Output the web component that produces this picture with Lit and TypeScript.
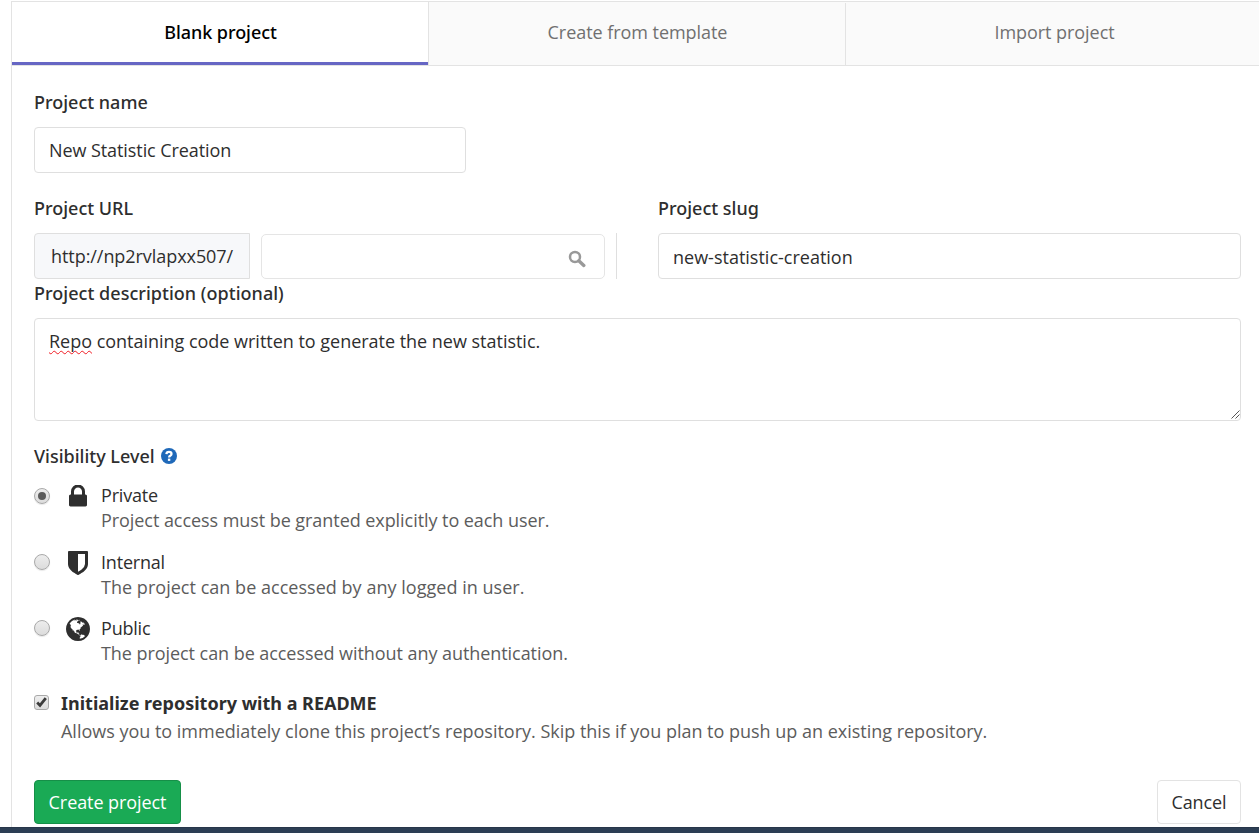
import { LitElement, html, css, svg } from 'lit';
import { customElement, property } from 'lit/decorators.js';
import { classMap } from 'lit/directives/class-map.js';

const lock = svg`<svg width="18" height="22" viewBox="0 256 1152 1408" fill="#2e2e2e"><path d="M320 768h512V576q0-106-75-181t-181-75-181 75-75 181v192zm832 96v576q0 40-28 68t-68 28H96q-40 0-68-28t-28-68V864q0-40 28-68t68-28h32V576q0-184 132-316t316-132 316 132 132 316v192h32q40 0 68 28t28 68z" transform="translate(0 96)"/></svg>`;
const shield = svg`<svg width="20" height="24" viewBox="0 0 1280 1536" fill="#2e2e2e"><path transform="translate(0 -128)" d="M1088 960V320H640v1137q119-63 213-137 235-184 235-360zm192-768v768q0 86-33.5 170.5t-83 150-118 127.5-126.5 103-121 77.5-89.5 49.5-42.5 20q-12 6-26 6t-26-6q-16-7-42.5-20t-89.5-49.5-121-77.5-126.5-103-118-127.5-83-150T0 960V192q0-26 19-45t45-19h1152q26 0 45 19t19 45z"/></svg>`;
const globe = svg`<svg width="24" height="24" viewBox="0 128 1536 1536" fill="#2e2e2e"><path d="M768 128q209 0 385.5 103t279.5 279.5 103 385.5-103 385.5-279.5 279.5-385.5 103-385.5-103-279.5-279.5-103-385.5 103-385.5 279.5-279.5 385.5-103zm274 521q-2 1-9.5 9.5t-13.5 9.5q2 0 4.5-5t5-11 3.5-7q6-7 22-15 14-6 52-12 34-8 51 11-2-2 9.5-13t14.5-12q3-2 15-4.5t15-7.5l2-22q-12 1-17.5-7t-6.5-21q0 2-6 8 0-7-4.5-8t-11.5 1-9 1q-10-3-15-7.5t-8-16.5-4-15q-2-5-9.5-11t-9.5-10q-1-2-2.5-5.5t-3-6.5-4-5.5-5.5-2.5-7 5-7.5 10-4.5 5q-3-2-6-1.5t-4.5 1-4.5 3-5 3.5q-3 2-8.5 3t-8.5 2q15-5-1-11-10-4-16-3 9-4 7.5-12t-8.5-14h5q-1-4-8.5-8.5t-17.5-8.5-13-6q-8-5-34-9.5t-33-.5q-5 6-4.5 10.5t4 14 3.5 12.5q1 6-5.5 13t-6.5 12q0 7 14 15.5t10 21.5q-3 8-16 16t-16 12q-5 8-1.5 18.5t10.5 16.5q2 2 1.5 4t-3.5 4.5-5.5 4-6.5 3.5l-3 2q-11 5-20.5-6t-13.5-26q-7-25-16-30-23-8-29 1-5-13-41-26-25-9-58-4 6-1 0-15-7-15-19-12 3-6 4-17.5t1-13.5q3-13 12-23 1-1 7-8.5t9.5-13.5.5-6q35 4 50-11 5-5 11.5-17t10.5-17q9-6 14-5.5t14.5 5.5 14.5 5q14 1 15.5-11t-7.5-20q12 1 3-17-4-7-8-9-12-4-27 5-8 4 2 8-1-1-9.5 10.5t-16.5 17.5-16-5q-1-1-5.5-13.5t-9.5-13.5q-8 0-16 15 3-8-11-15t-24-8q19-12-8-27-7-4-20.5-5t-19.5 4q-5 7-5.5 11.5t5 8 10.5 5.5 11.5 4 8.5 3q14 10 8 14-2 1-8.5 3.5t-11.5 4.5-6 4q-3 4 0 14t-2 14q-5-5-9-17.5t-7-16.5q7 9-25 6l-10-1q-4 0-16 2t-20.5 1-13.5-8q-4-8 0-20 1-4 4-2-4-3-11-9.5t-10-8.5q-46 15-94 41 6 1 12-1 5-2 13-6.5t10-5.5q34-14 42-7l5-5q14 16 20 25-7-4-30-1-20 6-22 12 7 12 5 18-4-3-11.5-10t-14.5-11-15-5q-16 0-22 1-146 80-235 222 7 7 12 8 4 1 5 9t2.5 11 11.5-3q9 8 3 19 1-1 44 27 19 17 21 21 3 11-10 18-1-2-9-9t-9-4q-3 5 .5 18.5t10.5 12.5q-7 0-9.5 16t-2.5 35.5-1 23.5l2 1q-3 12 5.5 34.5t21.5 19.5q-13 3 20 43 6 8 8 9 3 2 12 7.5t15 10 10 10.5q4 5 10 22.5t14 23.5q-2 6 9.5 20t10.5 23q-1 0-2.5 1t-2.5 1q3 7 15.5 14t15.5 13q1 3 2 10t3 11 8 2q2-20-24-62-15-25-17-29-3-5-5.5-15.5t-4.5-14.5q2 0 6 1.5t8.5 3.5 7.5 4 2 3q-3 7 2 17.5t12 18.5 17 19 12 13q6 6 14 19.5t0 13.5q9 0 20 10.5t17 19.5q5 8 8 26t5 24q2 7 8.5 13.5t12.5 9.5l16 8t13 7q5 2 18.5 10.5t21.5 11.5q10 4 16 4t14.5-2.5 13.5-3.5q15-2 29 15t21 21q36 19 55 11-2 1 .5 7.5t8 15.5 9 14.5 5.5 8.5q5 6 18 15t18 15q6-4 7-9-3 8 7 20t18 10q14-3 14-32-31 15-49-18 0-1-2.5-5.5t-4-8.5-2.5-8.5 0-7.5 5-3q9 0 10-3.5t-2-12.5-4-13q-1-8-11-20t-12-15q-5 9-16 8t-16-9q0 1-1.5 5.5t-1.5 6.5q-13 0-15-1 1-3 2.5-17.5t3.5-22.5q1-4 5.5-12t7.5-14.5 4-12.5-4.5-9.5-17.5-2.5q-19 1-26 20-1 3-3 10.5t-5 11.5-9 7q-7 3-24 2t-24-5q-13-8-22.5-29t-9.5-37q0-10 2.5-26.5t3-25-5.5-24.5q3-2 9-9.5t10-10.5q2-1 4.5-1.5t4.5 0 4-1.5 3-6q-1-1-4-3-3-3-4-3 7 3 28.5-1.5t27.5 1.5q15 11 22-2 0-1-2.5-9.5t-.5-13.5q5 27 29 9 3 3 15.5 5t17.5 5q3 2 7 5.5t5.5 4.5 5-.5 8.5-6.5q10 14 12 24 11 40 19 44 7 3 11 2t4.5-9.5 0-14-1.5-12.5l-1-8v-18l-1-8q-15-3-18.5-12t1.5-18.5 15-18.5q1-1 8-3.5t15.5-6.5 12.5-8q21-19 15-35 7 0 11-9-1 0-5-3t-7.5-5-4.5-2q9-5 2-16 5-3 7.5-11t7.5-10q9 12 21 2 7-8 1-16 5-7 20.5-10.5t18.5-9.5q7 2 8-2t1-12 3-12q4-5 15-9t13-5l17-11q3-4 0-4 18 2 31-11 10-11-6-20 3-6-3-9.5t-15-5.5q3-1 11.5-.5t10.5-1.5q15-10-7-16-17-5-43 12zm-163 877q206-36 351-189-3-3-12.5-4.5t-12.5-3.5q-18-7-24-8 1-7-2.5-13t-8-9-12.5-8-11-7q-2-2-7-6t-7-5.5-7.5-4.5-8.5-2-10 1l-3 1q-3 1-5.5 2.5t-5.5 3-4 3 0 2.5q-21-17-36-22-5-1-11-5.5t-10.5-7-10-1.5-11.5 7q-5 5-6 15t-2 13q-7-5 0-17.5t2-18.5q-3-6-10.5-4.5t-12 4.5-11.5 8.5-9 6.5-8.5 5.5-8.5 7.5q-3 4-6 12t-5 11q-2-4-11.5-6.5t-9.5-5.5q2 10 4 35t5 38q7 31-12 48-27 25-29 40-4 22 12 26 0 7-8 20.5t-7 21.5q0 6 2 16z"/></svg>`;

@customElement('visibility-option')
class VisibilityOption extends LitElement {
  @property() name = '';
  @property() hint = '';
  @property({ type: Boolean }) checked = false;
  @property({ attribute: false }) icon: unknown;

  static styles = css`
    :host { display: grid; grid-template-columns: 32px 24px 1fr; height: 50px; line-height: 25px; }
    .radio { box-sizing: border-box; width: 16px; height: 16px; margin-top: 4px; border: 1px solid #a9a9a9; border-radius: 50%; background: linear-gradient(#ededed, #dcdcdc); box-shadow: 0 1px 1px #e8e8e8; display: flex; align-items: center; justify-content: center; }
    .radio.on { margin-top: 5px; }
    .radio.on::after { content: ''; width: 8px; height: 8px; border-radius: 50%; background: #5c5c5c; }
    .icon { height: 25px; display: flex; align-items: center; justify-content: center; }
    .icon svg { display: block; }
    .text { padding-left: 11px; white-space: nowrap; }
    .name { letter-spacing: -0.2px; }
    .hint { color: #5c5c5c; letter-spacing: var(--hint-spacing, 0); }
  `;

  render() {
    return html`
      <span class=${classMap({ radio: true, on: this.checked })}></span>
      <span class="icon">${this.icon}</span>
      <div class="text"><div class="name">${this.name}</div><div class="hint">${this.hint}</div></div>`;
  }
}

@customElement('app-root')
class AppRoot extends LitElement {
  static styles = css`
    * { box-sizing: border-box; }
    :host { display: flex; flex-direction: column; height: 833px; overflow: hidden; background: #fff; color: #2e2e2e; font: 400 18px/24px "Open Sans", "Noto Sans", sans-serif; }
    .pane { width: 1252px; height: 826px; margin: 1px 0 0 11px; border: solid #e3e3e3; border-width: 1px 0 0 1px; }
    .tabs { display: grid; grid-template-columns: repeat(3, 417px); height: 64px; border-bottom: 1px solid #e3e3e3; background: #fafafa; }
    .tab { margin-top: 1px; border-right: 1px solid #e3e3e3; display: flex; align-items: center; justify-content: center; color: #707070; letter-spacing: -0.05px; }
    .tab span { margin: -4px 0 0 1px; }
    .tab.active { margin-top: 0; background: #fff; color: #000; box-shadow: inset 0 -3px #6666c4; font-family: "Noto Sans", sans-serif; font-weight: 500; letter-spacing: -0.05px; }
    .tab.active span { margin-top: -3px; }
    .form { width: 1229px; padding: 24px 0 0 22px; display: flex; flex-direction: column; }
    .label { font-family: "Noto Sans", sans-serif; font-weight: 500; height: 24px; white-space: nowrap; }
    .field { border: 1px solid #dfdfdf; border-radius: 4px; height: 46px; padding: 10px 14px; background: #fff; white-space: nowrap; letter-spacing: -0.08px; }
    .name { width: 432px; margin: 13px 0 23px; }
    .row { display: grid; grid-template-columns: 624px 1fr; }
    .url { display: flex; margin-top: 13px; height: 46px; }
    .prefix { width: 216px; border: 1px solid #dfdfdf; border-radius: 4px 0 0 4px; background: #f7f8fa; padding: 10px 0 0 16px; letter-spacing: -0.06px; }
    .select { width: 344px; height: 45px; margin: 1px 11px 0; border: 1px solid #e5e5e5; border-radius: 5px; display: flex; justify-content: flex-end; padding: 15px 18px 0 0; }
    .rule { width: 1px; background: #dfdfdf; }
    .slug { margin-top: 13px; padding-top: 11px; letter-spacing: 0; }
    .desc-label { margin-top: 2px; letter-spacing: 0.03px; }
    .area { position: relative; height: 103px; margin: 13px 0 23px; letter-spacing: -0.02px; }
    .misspelt { text-decoration: underline wavy #f01c24 1.3px; text-decoration-skip-ink: none; text-underline-offset: 2px; }
    .grip { position: absolute; right: 0; bottom: 1px; }
    .vis { display: flex; align-items: center; gap: 6px; }
    .options { display: flex; flex-direction: column; gap: 17px; padding-top: 15px; }
    .private { --hint-spacing: -0.06px; }
    .internal { --hint-spacing: 0.03px; }
    .public { --hint-spacing: -0.06px; margin-top: -1px; }
    .readme { display: grid; grid-template-columns: 27px 1fr; margin-top: 25px; line-height: 24px; }
    .check { width: 15px; height: 15px; margin-top: 4px; border: 1px solid #a9a9a9; border-radius: 3px; background: linear-gradient(#eee, #dcdcdc); }
    .check svg { display: block; }
    .bold { font-family: "Noto Sans", sans-serif; font-weight: 700; }
    .note { color: #5c5c5c; margin-top: 4px; white-space: nowrap; letter-spacing: -0.01px; }
    .actions { display: flex; justify-content: space-between; margin-top: 37px; }
    .btn { height: 44px; border-radius: 4px; padding: 9px 0; text-align: center; letter-spacing: -0.08px; }
    .create { width: 147px; background: #1aaa55; border: 1px solid #168f48; color: #fff; }
    .cancel { width: 84px; background: #fff; border: 1px solid #e3e3e3; }
    .footer { height: 6px; background: #2c3e54; border-top: 1px solid #27364a; }
  `;

  render() {
    return html`
      <div class="pane">
        <div class="tabs">
          <div class="tab active"><span>Blank project</span></div>
          <div class="tab"><span>Create from template</span></div>
          <div class="tab"><span>Import project</span></div>
        </div>
        <div class="form">
          <div class="label">Project name</div>
          <div class="field name">New Statistic Creation</div>
          <div class="row">
            <div>
              <div class="label">Project URL</div>
              <div class="url">
                <div class="prefix">http://np2rvlapxx507/</div>
                <div class="select">
                  <svg width="18" height="18" viewBox="0 0 18 18" fill="none" stroke="#999"><circle cx="7" cy="7" r="5" stroke-width="2.5"/><path d="M10.8 10.8L15.8 15.4" stroke-width="3.4" stroke-linecap="round"/></svg>
                </div>
                <div class="rule"></div>
              </div>
            </div>
            <div>
              <div class="label">Project slug</div>
              <div class="field slug">new-statistic-creation</div>
            </div>
          </div>
          <div class="label desc-label">Project description (optional)</div>
          <div class="field area"><span class="misspelt">Repo</span> containing code written to generate the new statistic.
            <svg class="grip" width="9" height="9" viewBox="0 0 9 9" stroke="#555" stroke-width="1"><path d="M0.5 8.5L8.5 0.5M4.5 8.5L8.5 4.5"/></svg>
          </div>
          <div class="label vis">Visibility Level
            <svg width="16" height="16" viewBox="0 0 16 16"><circle cx="8" cy="8" r="8" fill="#1f69b9"/><path d="M5.4 6.1Q5.5 3.8 8 3.8T10.5 5.9Q10.5 7 9.2 7.8Q8.1 8.4 8.1 9.4" fill="none" stroke="#fff" stroke-width="2.3"/><path d="M6.9 10.6h2.4v2.3H6.9z" fill="#fff"/></svg>
          </div>
          <div class="options">
            <visibility-option class="private" .icon=${lock} name="Private" hint="Project access must be granted explicitly to each user." checked></visibility-option>
            <visibility-option class="internal" .icon=${shield} name="Internal" hint="The project can be accessed by any logged in user."></visibility-option>
            <visibility-option class="public" .icon=${globe} name="Public" hint="The project can be accessed without any authentication."></visibility-option>
          </div>
          <div class="readme">
            <div class="check"><svg width="13" height="13" viewBox="0 0 13 13" fill="none" stroke="#3c3c3c" stroke-width="2.8"><path d="M2.2 6.6L5 9.4L10.8 2.2"/></svg></div>
            <div>
              <div class="bold">Initialize repository with a README</div>
              <div class="note">Allows you to immediately clone this project’s repository. Skip this if you plan to push up an existing repository.</div>
            </div>
          </div>
          <div class="actions">
            <div class="btn create">Create project</div>
            <div class="btn cancel">Cancel</div>
          </div>
        </div>
      </div>
      <div class="footer"></div>`;
  }
}
